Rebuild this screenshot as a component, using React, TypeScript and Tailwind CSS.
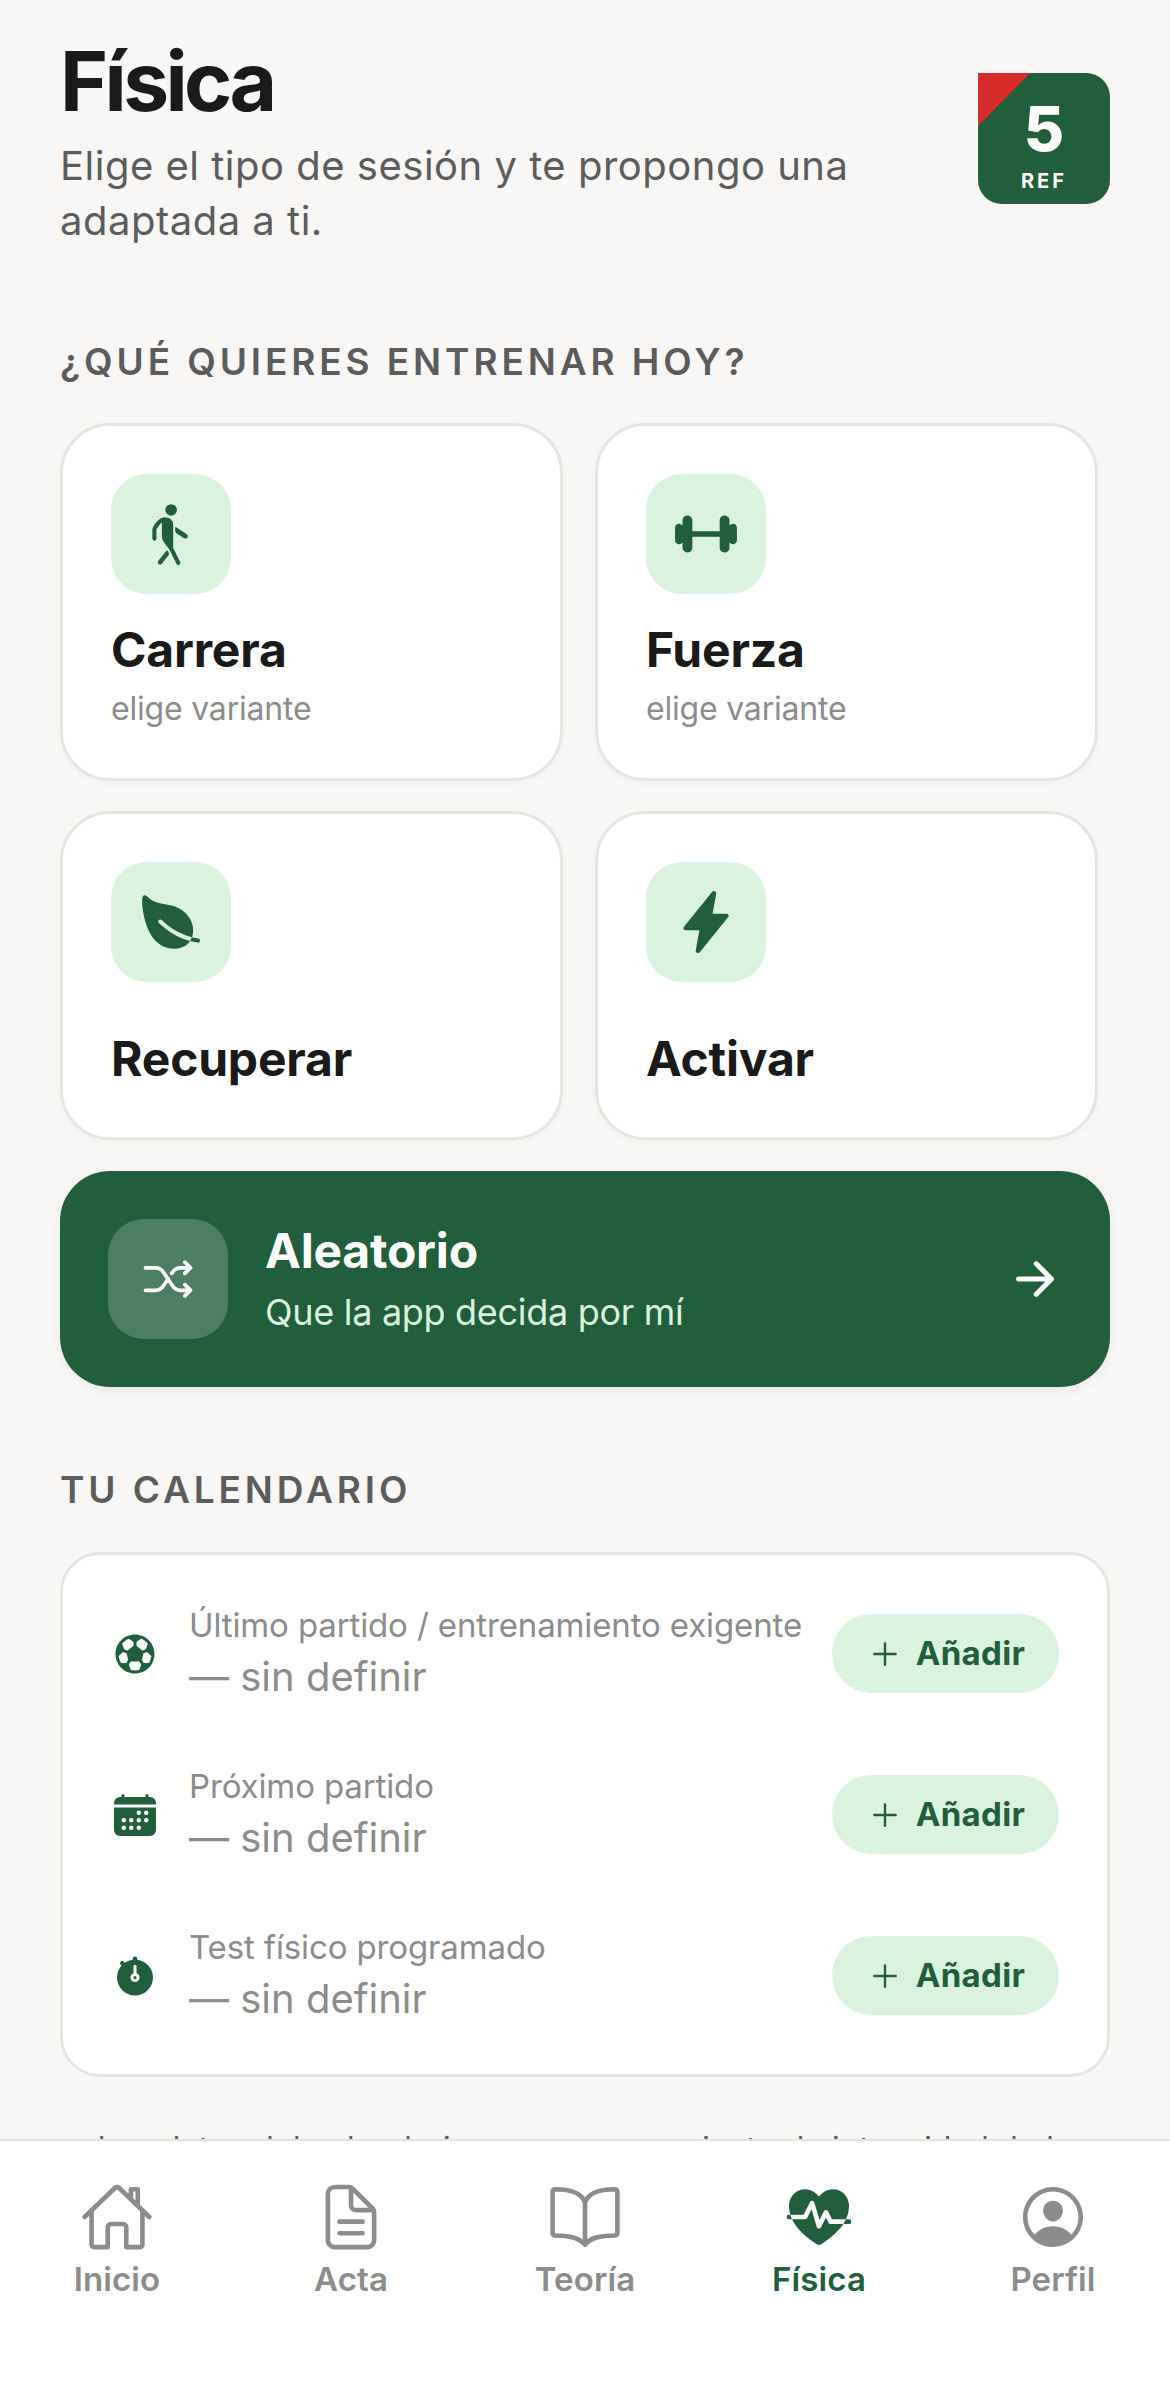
// App.tsx
// Física screen: session picker, calendar card and bottom tab bar.
import type { ReactNode } from 'react';
import {
  IoAdd, IoArrowForward, IoBarbell, IoBookOutline, IoCalendar, IoDocumentTextOutline,
  IoFitness, IoFlash, IoFootball, IoHomeOutline, IoLeaf, IoPersonCircleOutline,
  IoShuffle, IoStopwatch, IoWalk,
} from 'react-icons/io5';

const FONT = "font-['Inter','Liberation_Sans',sans-serif]";

function SessionCard({ icon, title, sub, tall }: { icon: ReactNode; title: string; sub?: string; tall?: boolean }) {
  return (
    <div className={`${tall ? 'h-[358px]' : 'h-[329px]'} rounded-[50px] border-[3px] border-[#e6e4df] bg-white pt-[48px] px-[48px] shadow-[0_2px_6px_rgba(0,0,0,0.04)]`}>
      <div className="w-[120px] h-[120px] rounded-[36px] bg-[#d9f3de] flex items-center justify-center text-[#205e3c]">
        {icon}
      </div>
      <div className={`${sub ? 'mt-[28px]' : 'mt-[49px]'} text-[48px] leading-[56px] font-bold text-[#1a1a1a] tracking-[-0.2px]`}>{title}</div>
      {sub && <div className="mt-[10px] text-[32px] leading-[42px] text-[#8c8c8c] tracking-[-0.2px]">{sub}</div>}
    </div>
  );
}

function CalendarRow({ icon, label }: { icon: ReactNode; label: string }) {
  return (
    <div className="h-[161px] flex items-center">
      <div className="w-[48px] flex items-center justify-center text-[#205e3c]">{icon}</div>
      <div className="ml-[30px] flex-1 min-w-0">
        <div className="text-[33px] leading-[44px] mb-[6px] -mt-[4px] text-[#8c8c8c] tracking-[-0.13px] whitespace-nowrap">{label}</div>
        <div className="text-[40px] leading-[48px] text-[#8c8c8c]">— sin definir</div>
      </div>
      <div className="w-[227px] h-[79px] rounded-full bg-[#d9f3de] flex items-center justify-center gap-[12px] text-[#205e3c]">
        <IoAdd size={38} />
        <span className="text-[33px] font-bold tracking-[0.3px]">Añadir</span>
      </div>
    </div>
  );
}

function Tab({ icon, label, active }: { icon: ReactNode; label: string; active?: boolean }) {
  return (
    <div className={`flex flex-col items-center ${active ? 'text-[#205e3c]' : 'text-[#8c8c8c]'}`}>
      <div className="h-[72px] flex items-center justify-center">{icon}</div>
      <div className="mt-[6px] text-[33px] leading-[40px] font-semibold tracking-[0.1px]">{label}</div>
    </div>
  );
}

export default function App() {
  return (
    <div className={`${FONT} relative h-[2396px] w-[1170px] overflow-hidden bg-[#f8f7f5]`}>
      {/* Header */}
      <div className="flex justify-between pl-[60px] pr-[60px] pt-[36px]">
        <div>
          <h1 className="text-[82px] leading-[92px] font-bold text-[#1a1a1a] tracking-[-3.6px]">Física</h1>
          <p className="mt-[10px] w-[820px] text-[40px] leading-[55px] text-[#5c5c5c] tracking-[0.5px]">
            Elige el tipo de sesión y te propongo una adaptada a ti.
          </p>
        </div>
        {/* REF badge */}
        <div className="relative mt-[37px] w-[132px] h-[131px] rounded-[24px] rounded-tl-none bg-[#205e3c] overflow-hidden flex flex-col items-center text-white shrink-0">
          <div className="absolute left-0 top-0 w-0 h-0 border-t-[53px] border-r-[52px] border-t-[#d92d2d] border-r-transparent" />
          <span className="mt-[24px] text-[62px] leading-[64px] font-extrabold">5</span>
          <span className="mt-[8px] text-[20px] leading-[24px] font-bold tracking-[3px]">REF</span>
        </div>
      </div>

      {/* Session picker */}
      <div className="mt-[92px] px-[60px] text-[37px] leading-[44px] font-semibold text-[#5c5c5c] tracking-[3.9px]">¿QUÉ QUIERES ENTRENAR HOY?</div>
      <div className="mt-[39px] ml-[60px] w-[1038px] grid grid-cols-2 gap-x-[32px] gap-y-[30px]">
        <SessionCard tall icon={<IoWalk size={66} />} title="Carrera" sub="elige variante" />
        <SessionCard tall icon={<IoBarbell size={66} />} title="Fuerza" sub="elige variante" />
        <SessionCard icon={<IoLeaf size={66} />} title="Recuperar" />
        <SessionCard icon={<IoFlash size={66} />} title="Activar" />
      </div>

      {/* Random session */}
      <div className="mt-[31px] mx-[60px] h-[216px] rounded-[50px] bg-[#205e3c] pl-[48px] pr-[48px] flex items-center shadow-[0_4px_12px_rgba(0,0,0,0.06)]">
        <div className="w-[120px] h-[120px] rounded-[36px] bg-white/20 flex items-center justify-center text-white">
          <IoShuffle size={60} />
        </div>
        <div className="ml-[37px] flex-1">
          <div className="text-[48px] leading-[56px] font-bold text-white tracking-[-0.2px]">Aleatorio</div>
          <div className="mt-[10px] text-[36px] leading-[46px] text-[#d9f3de] tracking-[-0.3px]">Que la app decida por mí</div>
        </div>
        <IoArrowForward size={54} className="text-white" />
      </div>

      {/* Calendar */}
      <div className="mt-[81px] px-[60px] text-[37px] leading-[44px] font-semibold text-[#5c5c5c] tracking-[3.9px]">TU CALENDARIO</div>
      <div className="mt-[40px] mx-[60px] h-[525px] rounded-[40px] border-[3px] border-[#e6e4df] bg-white px-[48px] py-[18px]">
        <CalendarRow icon={<IoFootball size={48} />} label="Último partido / entrenamiento exigente" />
        <CalendarRow icon={<IoCalendar size={48} />} label="Próximo partido" />
        <CalendarRow icon={<IoStopwatch size={48} />} label="Test físico programado" />
      </div>
      {/* Note scrolled under the tab bar: only the tops of its first line show */}
      <p className="mt-[49px] px-[60px] text-center text-[31px] leading-[44px] text-[#5c5c5c] tracking-[0.6px]">
        Los datos del calendario se usan para ajustar la intensidad de la sesión.
      </p>

      {/* Bottom tab bar */}
      <nav className="absolute left-0 right-0 bottom-0 h-[257px] border-t-2 border-[#e4e3df] bg-white grid grid-cols-5 pt-[40px]">
        <Tab icon={<IoHomeOutline size={74} />} label="Inicio" />
        <Tab icon={<IoDocumentTextOutline size={74} />} label="Acta" />
        <Tab icon={<IoBookOutline size={74} />} label="Teoría" />
        <Tab active icon={<IoFitness size={74} />} label="Física" />
        <Tab icon={<IoPersonCircleOutline size={74} />} label="Perfil" />
      </nav>
    </div>
  );
}
